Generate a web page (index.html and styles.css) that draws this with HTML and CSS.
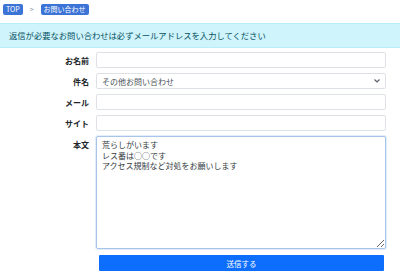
FILE: index.html
```html
<!DOCTYPE html>
<html>

<head>
    <title>お問い合わせ</title>
    <link rel="stylesheet" href="styles.css">
</head>

<body>

    <!-- パンくず -->
    <div class="breadcrumb">
        <span class="crumb">TOP</span>
        <span class="sep">&gt;</span>
        <span class="crumb">お問い合わせ</span>
    </div>

    <div class="alert">返信が必要なお問い合わせは必ずメールアドレスを入力してください</div>

    <form class="contact-form">
        <div class="row">
            <label class="label">お名前</label>
            <input class="field" type="text">
        </div>
        <div class="row">
            <label class="label">件名</label>
            <div class="select-wrap">
                <select class="field">
                    <option>その他お問い合わせ</option>
                </select>
                <svg class="chevron" width="8" height="6" viewBox="0 0 8 6">
                    <path d="M1.5 1.5 L4 4 L6.5 1.5" fill="none" stroke="#5a6169" stroke-width="1.2" />
                </svg>
            </div>
        </div>
        <div class="row">
            <label class="label">メール</label>
            <input class="field" type="text">
        </div>
        <div class="row">
            <label class="label">サイト</label>
            <input class="field" type="text">
        </div>
        <div class="row">
            <label class="label label-top">本文</label>
            <textarea class="field body-text">荒らしがいます
レス番は○○です
アクセス規制など対処をお願いします</textarea>
        </div>
        <div class="row">
            <span class="label"></span>
            <button type="button" class="submit">送信する</button>
        </div>
    </form>

</body>

</html>
```

FILE: styles.css
```css
body {
    margin: 0;
    font-family: "Noto Sans CJK JP", "Liberation Sans", sans-serif;
    color: #212529;
    background: #fff;
}

/* パンくず */
.breadcrumb {
    display: flex;
    align-items: center;
    gap: 5px;
    padding: 3px 3px 0;
    height: 12px;
}

.crumb {
    background: #3b73d6;
    color: white;
    font-size: 7px;
    line-height: 11px;
    padding: 0 3px;
    border-radius: 2px;
}

.sep {
    color: #8a96a8;
    font-size: 7px;
    padding: 0 2px;
}

.alert {
    margin-top: 8px;
    background: #cff4fc;
    color: #055160;
    font-size: 8.3px;
    line-height: 23px;
    padding: 0 9px;
    border-top: 1px solid #b6effb;
    border-bottom: 1px solid #b6effb;
}

/* フォーム */
.contact-form {
    display: flex;
    flex-direction: column;
    gap: 5px;
    padding: 4px 14px 0 0;
}

.row {
    display: flex;
    align-items: center;
}

.label {
    width: 89px;
    flex-shrink: 0;
    padding-right: 7px;
    text-align: right;
    font-size: 8px;
    font-weight: bold;
    color: #212529;
}

.label-top {
    align-self: flex-start;
    padding-top: 3px;
}

.field {
    flex-grow: 1;
    box-sizing: border-box;
    height: 16px;
    margin: 0;
    border: 1px solid #dee2e6;
    border-radius: 2px;
    background: white;
    font-family: inherit;
    font-size: 8px;
    color: #495057;
    padding: 0 5px;
    outline: none;
}

.select-wrap {
    flex-grow: 1;
    display: flex;
    position: relative;
}

.select-wrap select {
    appearance: none;
    width: 100%;
}

.chevron {
    position: absolute;
    right: 5px;
    top: 5px;
}

.body-text {
    height: 113px;
    padding: 3px 5px;
    line-height: 10.5px;
    border-color: #a8c4e8;
    box-shadow: 0 0 0 1px #e3eefc;
    resize: vertical;
    color: #343a40;
}

.submit {
    flex-grow: 1;
    margin: 1px 2px 0 3px;
    height: 16px;
    border: none;
    border-radius: 1px;
    background: #0d6efd;
    color: white;
    font-family: inherit;
    font-size: 7.5px;
    padding: 0;
}
```
